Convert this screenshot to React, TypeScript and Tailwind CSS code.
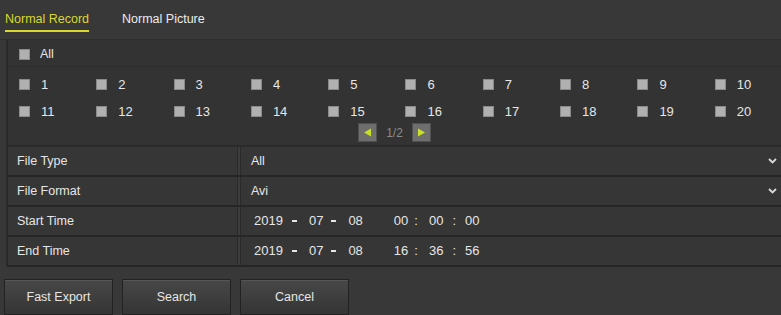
import React from 'react';

const channels = Array.from({ length: 20 }, (_, i) => i + 1);

function Box() {
  return <span className="w-[11px] h-[11px] bg-[#b0b0b0] border border-[#8a8a8a] shrink-0" />;
}

function Chevron() {
  return (
    <svg width="9" height="6" viewBox="0 0 9 6" className="shrink-0">
      <path d="M1 1 L4.5 4.5 L8 1" stroke="#d8d8d8" strokeWidth="1.8" fill="none" />
    </svg>
  );
}

function Dash() {
  return <span className="w-[5px] h-[2px] bg-[#e6e6e6]" />;
}

function DateTime({ time }: { time: [string, string, string] }) {
  return (
    <div className="flex items-center text-[13px] text-[#e6e6e6] whitespace-pre">
      <span className="ml-[3px] mr-[9px]">2019</span>
      <Dash />
      <span className="ml-[12px] mr-[8px]">07</span>
      <Dash />
      <span className="ml-[12px]">08</span>
      <span className="ml-[31px]">{time[0]}</span>
      <span className="ml-[6px]">:</span>
      <span className="ml-[11px]">{time[1]}</span>
      <span className="ml-[9px]">:</span>
      <span className="ml-[9px]">{time[2]}</span>
    </div>
  );
}

function Row({ label, children }: { label: string; children: React.ReactNode }) {
  return (
    <div className="flex h-[30px] border-b-2 border-[#262626]">
      <div className="w-[230px] bg-[#363636] flex items-center pl-[9px] text-[12.5px] text-[#e6e6e6] border-r border-[#2a2a2a]">
        {label}
      </div>
      <div className="w-[3px] bg-[#3c3c3c] border-r border-[#2a2a2a]" />
      <div className="flex-1 bg-[#363636] flex items-center justify-between pl-[10px] pr-[4px]">
        {children}
      </div>
    </div>
  );
}

export default function App() {
  return (
    <div
      className="w-[781px] h-[315px] bg-[#383838] overflow-hidden"
      style={{ fontFamily: '"Liberation Sans", Arial, sans-serif' }}
    >
      {/* Tabs */}
      <div className="h-[40px] flex items-start pt-[10px] border-b border-[#2e2e2e]">
        <div className="ml-[5px] flex flex-col">
          <span className="text-[12.5px] text-[#d9d92b] leading-[18px]">Normal Record</span>
          <span className="mt-[2px] h-[2px] w-[84px] bg-[#d9d92b]" />
        </div>
        <span className="ml-[33px] text-[12.5px] text-[#ececec] leading-[18px]">Normal Picture</span>
      </div>

      {/* Channel panel */}
      <div className="ml-[6px] border-l-2 border-[#2a2a2a] bg-[#333333]">
        <div className="h-[27px] flex items-center gap-[10px] pl-[11px] pt-[2px] border-b border-[#2c2c2c]">
          <Box />
          <span className="text-[12.5px] text-[#e6e6e6]">All</span>
        </div>
        <div className="pl-[11px] pt-[11px] grid grid-cols-[repeat(10,77.3px)] gap-y-[14px]">
          {channels.map((n) => (
            <div key={n} className="flex items-center gap-[11px] h-[13px]">
              <Box />
              <span className="text-[13px] text-[#e6e6e6]">{n}</span>
            </div>
          ))}
        </div>
        <div className="h-[27px] flex items-center justify-center gap-[9px] pt-[2px]">
          <span className="w-[19px] h-[19px] bg-[#6e6e6e] border border-[#505050] flex items-center justify-center">
            <svg width="9" height="9" viewBox="0 0 9 9">
              <path d="M1 4.5 L8 0.5 L8 8.5 Z" fill="#c8e02a" />
            </svg>
          </span>
          <span className="text-[12px] text-[#8a8a8a]">1/2</span>
          <span className="w-[19px] h-[19px] bg-[#6e6e6e] border border-[#505050] flex items-center justify-center">
            <svg width="9" height="9" viewBox="0 0 9 9">
              <path d="M8 4.5 L1 0.5 L1 8.5 Z" fill="#c8e02a" />
            </svg>
          </span>
        </div>

        {/* Form rows */}
        <div className="border-t-2 border-[#2a2a2a]">
          <Row label="File Type">
            <span className="text-[12.5px] text-[#e6e6e6]">All</span>
            <Chevron />
          </Row>
          <Row label="File Format">
            <span className="text-[12.5px] text-[#e6e6e6]">Avi</span>
            <Chevron />
          </Row>
          <Row label="Start Time">
            <DateTime time={['00', '00', '00']} />
          </Row>
          <Row label="End Time">
            <DateTime time={['16', '36', '56']} />
          </Row>
        </div>
      </div>

      {/* Buttons */}
      <div className="flex gap-[9px] pl-[4px] pt-[12px]">
        {['Fast Export', 'Search', 'Cancel'].map((b) => (
          <button
            key={b}
            className="w-[109px] h-[36px] text-[12.5px] text-[#e6e6e6] bg-gradient-to-b from-[#474747] to-[#353535] border border-[#222222] shadow-[inset_0_1px_0_#555555]"
          >
            {b}
          </button>
        ))}
      </div>
    </div>
  );
}
